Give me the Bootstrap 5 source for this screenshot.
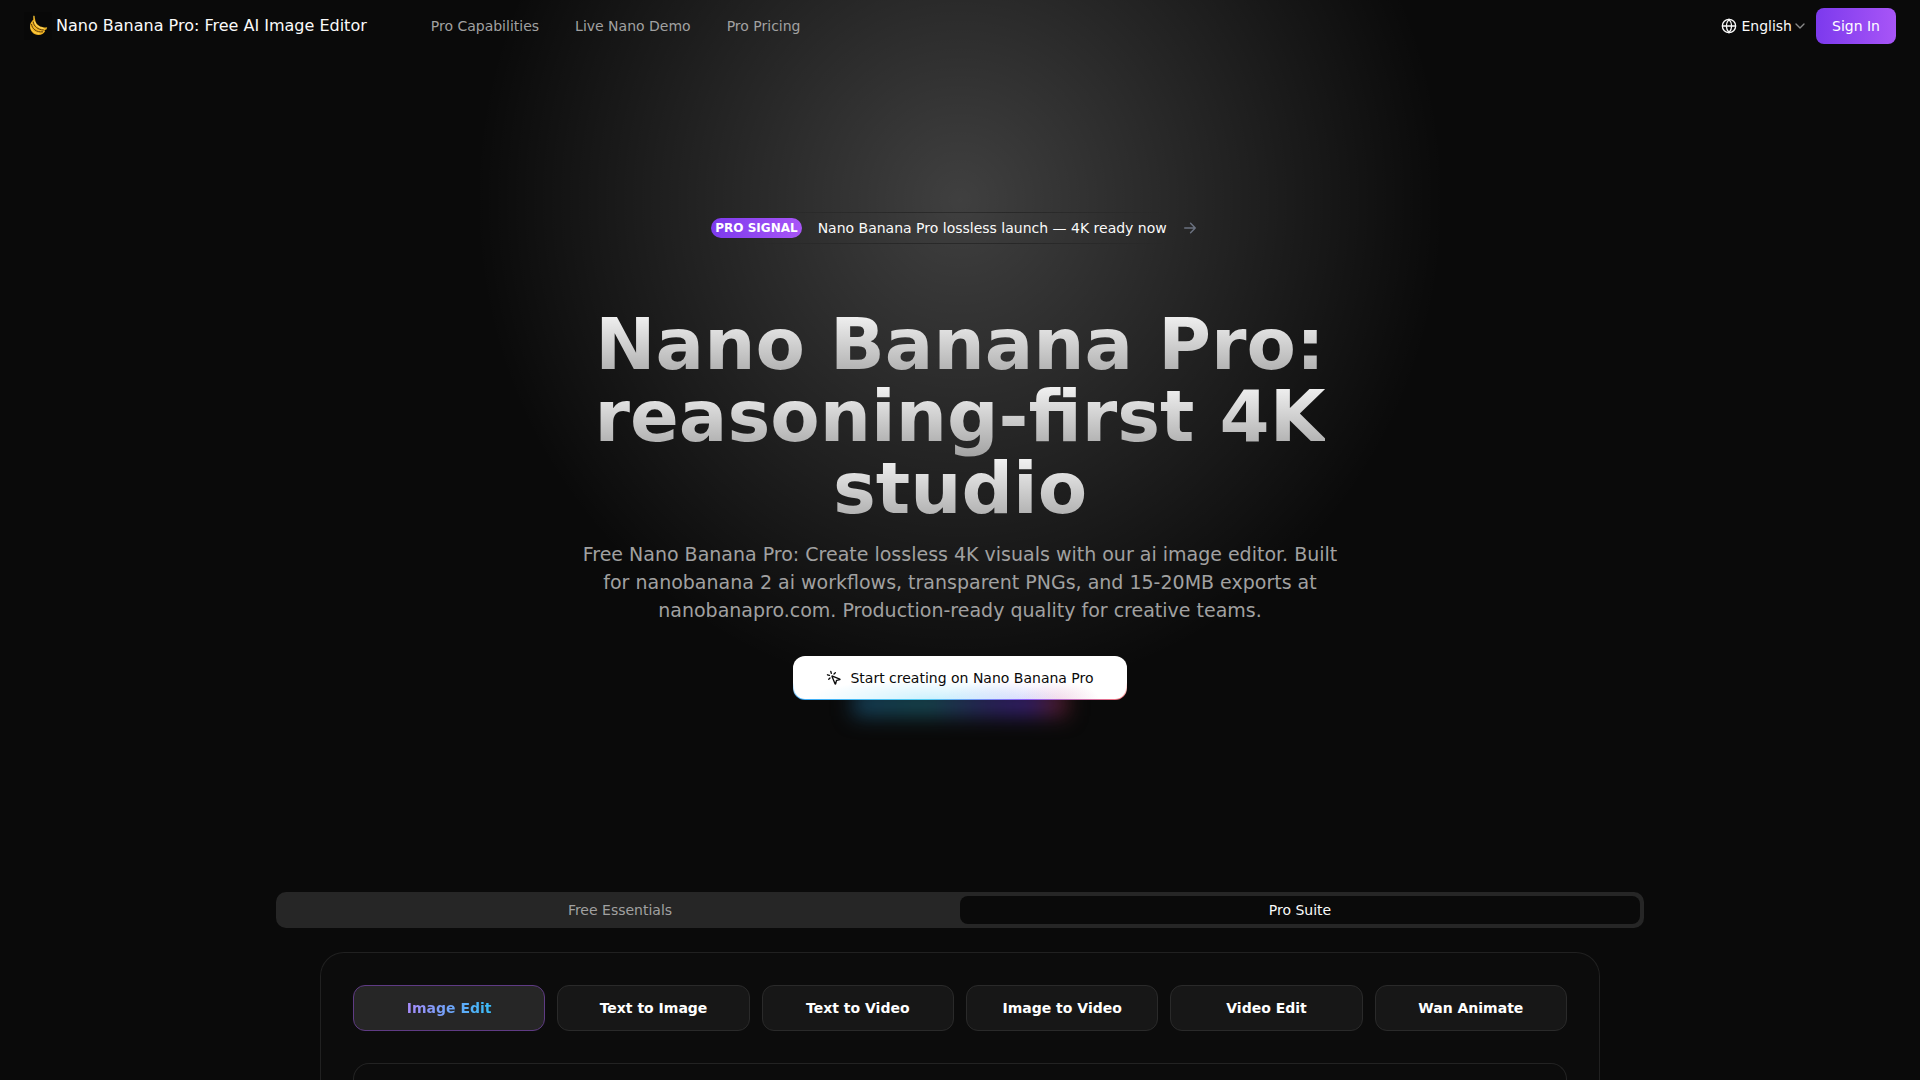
<!DOCTYPE html>
<html lang="en">
<head>
<meta charset="utf-8">
<meta name="viewport" content="width=device-width, initial-scale=1">
<title>Nano Banana Pro: Free AI Image Editor</title>
<link href="https://cdn.jsdelivr.net/npm/bootstrap@5.3.0/dist/css/bootstrap.min.css" rel="stylesheet">
<style>
  body {
    background: #0a0a0a;
    color: #fafafa;
    font-family: "DejaVu Sans", sans-serif;
    font-size: 14px;
    line-height: 20px;
    overflow-x: hidden;
  }
  .page {
    min-height: 100vh;
    background: radial-gradient(485px 500px at 50% 200px, rgba(255,255,255,.22), transparent) no-repeat;
  }
  .site-nav { padding: 8px 24px; }
  .site-brand { font-size: 16px; line-height: 24px; color: #fafafa; gap: 4px; }
  .site-links { gap: 36px; margin-left: 64px; }
  .site-links a { color: #a1a1a1; text-decoration: none; }
  .lang-btn { font-size: 14px; line-height: 20px; color: #fafafa; gap: 4px; padding: 8px; }
  .lang-btn .chev { margin-left: -4px; color: #8a8a8a; }
  .violet { background: linear-gradient(90deg, #7c3aed, #a855f7); color: #fff; border: 0; }
  .signin { font-size: 14px; line-height: 20px; padding: 8px 16px; border-radius: 8px; }

  .hero { padding-top: 160px; }
  .signal {
    gap: 16px;
    height: 32px;
    padding: 0 24px 0 12px;
    color: #fafafa;
    text-decoration: none;
    border: 1px solid transparent;
    border-image: linear-gradient(90deg, transparent 10%, rgba(0,0,0,.3) 40%, rgba(0,0,0,.3) 60%, transparent 90%) 1;
    border-width: 1px 0;
  }
  .signal-tag { font-size: 12px; line-height: 20px; font-weight: 700; padding: 0 4px; border-radius: 10px; }
  .signal svg { color: #6b7280; }
  .headline { font-size: 72px; line-height: 72px; font-weight: 700; max-width: 768px; margin: 64px 0 0; }
  .headline span {
    background: linear-gradient(180deg, #fff, #a1a1a1);
    -webkit-background-clip: text;
    background-clip: text;
    color: transparent;
  }
  .pitch { font-size: 19px; line-height: 28px; color: #a1a1a1; max-width: 768px; margin: 16px 0 32px; }
  .cta { isolation: isolate; }
  .cta-btn {
    height: 44px;
    padding: 0 32px;
    gap: 8px;
    border: 1px solid transparent;
    border-radius: 12px;
    font-size: 14px;
    color: #0a0a0a;
    background:
      radial-gradient(38% 20px at 42% 100%, rgba(56,200,248,.25), transparent) padding-box,
      radial-gradient(24% 20px at 68% 100%, rgba(139,92,246,.18), transparent) padding-box,
      radial-gradient(12% 18px at 80% 100%, rgba(248,113,113,.14), transparent) padding-box,
      linear-gradient(#fff, #fff) padding-box,
      linear-gradient(#fff 60%, rgba(255,255,255,0)) border-box,
      linear-gradient(90deg, #38a8f8, #4cc9f0 40%, #8b5cf6 70%, #f87171) border-box;
  }
  .cta-glow {
    left: 18%;
    right: 18%;
    bottom: -16px;
    height: 24px;
    z-index: -1;
    filter: blur(10px);
    background: linear-gradient(90deg, #153f5a, #174a54 35%, #2e2464 66%, #361f70 82%, #5e1d22);
  }

  .workspace { max-width: 1368px; margin-top: 192px; }
  .plan-tabs { background: #262626; border-radius: 10px; padding: 4px; }
  .plan-tabs button {
    flex: 1 1 0;
    border: 0;
    border-radius: 8px;
    background: transparent;
    color: #a1a1a1;
    padding: 4px;
  }
  .plan-tabs button.current { background: #0a0a0a; color: #fafafa; }
  .studio {
    width: calc(100% - 88px);
    margin-top: 24px;
    padding: 32px;
    border: 1px solid #212121;
    border-bottom: 0;
    border-radius: 24px 24px 0 0;
    background: #0c0c0c;
  }
  .tool-grid { display: grid; grid-template-columns: repeat(6, 1fr); gap: 12px; }
  .tool-grid button {
    height: 46px;
    border: 1px solid #2a2a2a;
    border-radius: 12px;
    background: #171717;
    color: #fff;
    font-weight: 700;
  }
  .tool-grid button.current { background: #262626; border-color: #5f3b84; }
  .tool-grid button.current span {
    background: linear-gradient(90deg, #a78bfa, #38bdf8);
    -webkit-background-clip: text;
    background-clip: text;
    color: transparent;
  }
  .canvas-panel {
    height: 17px;
    margin: 32px 0 -32px;
    border: 1px solid #232323;
    border-bottom: 0;
    border-radius: 16px 16px 0 0;
  }
</style>
</head>
<body>
<div class="page">
  <header class="site-nav d-flex align-items-center">
    <a class="site-brand d-flex align-items-center text-decoration-none" href="#">
      <svg width="28" height="28" viewBox="0 0 28 28" aria-hidden="true">
        <rect width="28" height="28" fill="#080808"/>
        <path d="M9 4.200l1.500-.2.600 3.400c.4 3.600 3 6.400 6.400 7.400 1.800.6 3.600.8 5.300.8l.2 1.400c-1 .7-1.800 1-2.800 1.200l1 .8c-1.400 2.600-3.600 4-6.700 4C9.500 23 5.800 19 6 13.800c.1-2.400 1.400-4.600 3.400-6.400z" fill="#f0b323"/>
        <path d="M9.200 9.600c.4 4.600 4.600 8.200 10.600 8.400M7.500 12c.5 4.800 4.900 8.600 11.500 7.800" fill="none" stroke="#5b3c0c" stroke-width="1"/>
        <path d="M10.400 9.400c1.200 4 4.600 6.600 9.200 7.100" fill="none" stroke="#ffe071" stroke-width="1"/>
        <path d="M7 15.500c.8 3.600 4 5.900 8.500 6" fill="none" stroke="#ffd04a" stroke-width="1"/>
        <path d="M9.800 3.800v2.400M22 16l1 .3" fill="none" stroke="#a98a2b" stroke-width="1.500"/>
      </svg>
      <span>Nano Banana Pro: Free AI Image Editor</span>
    </a>
    <nav class="site-links d-flex" aria-label="Main">
      <a href="#">Pro Capabilities</a>
      <a href="#">Live Nano Demo</a>
      <a href="#">Pro Pricing</a>
    </nav>
    <div class="d-flex align-items-center ms-auto">
      <button type="button" class="lang-btn btn border-0 d-flex align-items-center">
        <svg width="16" height="16" viewBox="0 0 24 24" fill="none" stroke="currentColor" stroke-width="2" aria-hidden="true"><circle cx="12" cy="12" r="10"/><path d="M2 12h20M12 2a15.300 15.300 0 0 1 4 10 15.300 15.300 0 0 1-4 10 15.300 15.300 0 0 1-4-10 15.300 15.300 0 0 1 4-10z"/></svg>
        <span>English</span>
        <svg class="chev" width="16" height="16" viewBox="0 0 24 24" fill="none" stroke="currentColor" stroke-width="2" stroke-linecap="round" stroke-linejoin="round" aria-hidden="true"><path d="M6 9l6 6 6-6"/></svg>
      </button>
      <button type="button" class="violet signin">Sign In</button>
    </div>
  </header>

  <main>
    <section class="hero d-flex flex-column align-items-center text-center">
      <a class="signal d-flex align-items-center" href="#">
        <span class="violet signal-tag">PRO SIGNAL</span>
        <span>Nano Banana Pro lossless launch — 4K ready now</span>
        <svg width="14" height="14" viewBox="0 0 24 24" fill="none" stroke="currentColor" stroke-width="2.500" stroke-linecap="round" stroke-linejoin="round" aria-hidden="true"><path d="M3 12h18M13 4l8 8-8 8"/></svg>
      </a>
      <h1 class="headline"><span>Nano Banana Pro: reasoning-first 4K studio</span></h1>
      <p class="pitch">Free Nano Banana Pro: Create lossless 4K visuals with our ai image editor. Built for nanobanana 2 ai workflows, transparent PNGs, and 15-20MB exports at nanobanapro.com. Production-ready quality for creative teams.</p>
      <div class="cta position-relative">
        <div class="cta-glow position-absolute"></div>
        <button type="button" class="cta-btn d-flex align-items-center">
          <svg width="16" height="16" viewBox="0 0 24 24" fill="none" stroke="currentColor" stroke-width="2" stroke-linecap="round" stroke-linejoin="round" aria-hidden="true"><path d="M9.037 9.690a.498.498 0 0 1 .653-.653l11 4.500a.5.5 0 0 1-.074.949l-4.349 1.041a1 1 0 0 0-.740.739l-1.040 4.350a.5.5 0 0 1-.950.074zM14 4.100 12 6M5.100 8l-2.900-.8M6 12l-1.900 2M7.200 2.200 8 5.100"/></svg>
          <span>Start creating on Nano Banana Pro</span>
        </button>
      </div>
    </section>

    <section class="workspace mx-auto">
      <div class="plan-tabs d-flex" role="tablist">
        <button type="button" role="tab" aria-selected="false">Free Essentials</button>
        <button type="button" role="tab" aria-selected="true" class="current">Pro Suite</button>
      </div>
      <div class="studio mx-auto">
        <div class="tool-grid">
          <button type="button" class="current"><span>Image Edit</span></button>
          <button type="button">Text to Image</button>
          <button type="button">Text to Video</button>
          <button type="button">Image to Video</button>
          <button type="button">Video Edit</button>
          <button type="button">Wan Animate</button>
        </div>
        <div class="canvas-panel"></div>
      </div>
    </section>
  </main>
</div>
<script src="https://cdn.jsdelivr.net/npm/bootstrap@5.3.0/dist/js/bootstrap.bundle.min.js"></script>
</body>
</html>
